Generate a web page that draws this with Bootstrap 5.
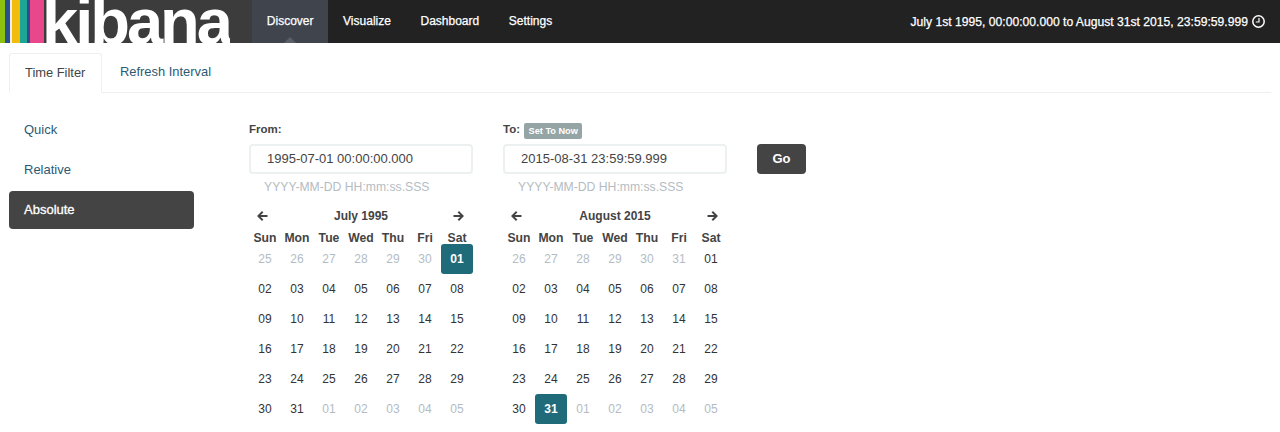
<!DOCTYPE html>
<html lang="en">
<head>
  <meta charset="UTF-8" />
  <title>Kibana</title>
  <link href="https://cdn.jsdelivr.net/npm/bootstrap@5.3.0/dist/css/bootstrap.min.css" rel="stylesheet">
  <style>
    html, body { height: 432px; overflow: hidden; }
    body { background: #fff; color: #444; font: 13px/18px "Liberation Sans", Arial, sans-serif; }
    a { text-decoration: none; }

    .kb-top { height: 43px; background: #222; overflow: hidden; }
    .kb-brand { width: 252px; height: 43px; background: #3c3c3c; overflow: hidden; }
    .kb-stripes { width: 44px; height: 43px; flex: none;
      background-image: linear-gradient(90deg, #8cc20f 0 5px, #2a4e92 5px 10px, #eee 10px 12px, #f1bc0c 12px 20px, #1ea593 20px 27px, #2a4e92 27px 30px, #e8488b 30px 44px); }
    .kb-logotext { color: #fff; font: bold 65px/43px "Liberation Sans", sans-serif; letter-spacing: -3px; margin-left: -2px; height: 43px; overflow: hidden; }
    .kb-mainnav a { display: block; position: relative; height: 43px; line-height: 42px; padding: 0 14.8px; color: #fff; font-size: 12px; -webkit-text-stroke: .25px #fff; }
    .kb-mainnav a.kb-on { background: #3f444d; }
    .kb-mainnav a.kb-on::after { content: ""; position: absolute; left: 50%; bottom: 0; margin-left: -6px; border: 6px solid transparent; border-top: 0; border-bottom-color: #5b6068; }
    .kb-range { height: 43px; color: #fff; font-size: 12.15px; -webkit-text-stroke: .25px #fff; padding-right: 15px; }

    .kb-tabs { margin: 10px 9px 0; height: 40px; border-bottom: 1px solid #ecf0f1; }
    .kb-tabs a { display: block; height: 40px; line-height: 37px; padding: 0 17px 0 18px; color: #2c5a74; font-size: 12.9px; }
    .kb-tabs a.kb-on { color: #444; width: 93px; border: 1px solid #ecf0f1; border-bottom-color: #fff; border-radius: 3px 3px 0 0; padding: 0 0 0 15px; background: #fff; }

    .kb-side { width: 185px; margin: 18px 0 0 9px; flex: none; }
    .kb-side a { display: block; height: 38px; line-height: 38px; padding-left: 15px; margin-bottom: 2px; color: #2c5a74; font-size: 13px; border-radius: 4px; }
    .kb-side a.kb-on { background: #444; color: #fff; -webkit-text-stroke: .3px #fff; }

    .kb-pickers { margin: 30px 0 0 55px; gap: 30px; }
    .kb-pick { width: 224px; }
    .kb-lbl { height: 21px; line-height: 13px; font-size: 11.5px; font-weight: bold; color: #444; display: flex; align-items: flex-start; }
    .kb-setnow { margin-left: 4px; padding: 0 4.5px; height: 16px; line-height: 16px; font-size: 9.2px; font-weight: bold; color: #fff; background: #95a5a6; border-radius: 2px; }
    .kb-in { height: 30px; line-height: 26px; border: 2px solid #ecf0f1; border-radius: 4px; padding-left: 16px; font-size: 13px; color: #444; }
    .kb-help { height: 26px; padding: 4px 0 0 15px; line-height: 18px; color: #b4bcc2; font-size: 12.2px; }
    .kb-monthbar { display: grid; grid-template-columns: repeat(7, 32px); height: 22px; line-height: 22px; margin-top: 5px; text-align: center; font-weight: bold; font-size: 12px; }
    .kb-monthbar b { grid-column: span 5; }
    .kb-days { display: grid; grid-template-columns: repeat(7, 32px); grid-template-rows: 17px; grid-auto-rows: 30px; text-align: center; }
    .kb-days i { font-style: normal; font-weight: bold; font-size: 12.2px; line-height: 23px; height: 17px; }
    .kb-days span { line-height: 30px; font-size: 12px; color: #333; border-radius: 3px; }
    .kb-days span.kb-off { color: #b4bcc2; }
    .kb-days span.kb-pick-day { background: #1f6b7a; color: #fff; font-weight: bold; }
    .kb-go { margin-top: 21px; }
    .kb-go a { display: block; width: 49px; height: 30px; line-height: 30px; background: #444; color: #fff; font-weight: bold; font-size: 13px; text-align: center; border-radius: 4px; }
    .kb-arrow { display: block; margin-top: 5px; }
    .kb-arrow-l { margin-left: 7px; }
    .kb-arrow-r { margin-left: 12px; }
  </style>
</head>
<body>
  <div class="kb-top d-flex align-items-start">
    <a class="kb-brand d-flex" href="#">
      <div class="kb-stripes"></div>
      <div class="kb-logotext">kibana</div>
    </a>
    <div class="kb-mainnav d-flex">
      <a class="kb-on" href="#">Discover</a>
      <a href="#">Visualize</a>
      <a href="#">Dashboard</a>
      <a href="#">Settings</a>
    </div>
    <div class="kb-range ms-auto d-flex align-items-center gap-1">
      <span>July 1st 1995, 00:00:00.000 to August 31st 2015, 23:59:59.999</span>
      <svg width="13" height="13" viewBox="0 0 13 13" fill="none" stroke="#fff"><circle cx="6.5" cy="6.5" r="5.7" stroke-width="1.5"/><path d="M7 3v4H3.8" stroke-width="1.2"/></svg>
    </div>
  </div>

  <div class="kb-tabs d-flex">
    <a class="kb-on" href="#">Time Filter</a>
    <a href="#">Refresh Interval</a>
  </div>

  <div class="d-flex">
    <div class="kb-side">
      <a href="#">Quick</a>
      <a href="#">Relative</a>
      <a class="kb-on" href="#">Absolute</a>
    </div>
    <div class="kb-pickers d-flex" id="pickers"></div>
  </div>

  <script>
    const arrow = (cls, d) => `<svg class="kb-arrow ${cls}" width="12" height="12" viewBox="0 0 12 12" fill="#444"><path d="${d}"/></svg>`;
    const left = arrow("kb-arrow-l", "M6 1 7.4 2.4 4.8 5H11.5V7H4.8L7.4 9.6 6 11 1 6Z");
    const right = arrow("kb-arrow-r", "M6 1 4.6 2.4 7.2 5H.5V7H7.2L4.6 9.6 6 11 11 6Z");
    const names = ["Sun", "Mon", "Tue", "Wed", "Thu", "Fri", "Sat"];
    const pad = n => String(n).padStart(2, "0");

    function calendar(month, lead, total, sel) {
      let cells = names.map(n => `<i>${n}</i>`).join("");
      let all = [];
      for (let i = 0; i < lead.length; i++) all.push([lead[i], true]);
      for (let d = 1; d <= total; d++) all.push([d, false]);
      let next = 1;
      while (all.length < 42) all.push([next++, true]);
      all.forEach(([d, off]) => {
        const on = !off && d === sel;
        cells += `<span class="${on ? "kb-pick-day" : off ? "kb-off" : ""}">${pad(d)}</span>`;
      });
      return `<div class="kb-monthbar"><div>${left}</div><b>${month}</b><div>${right}</div></div><div class="kb-days">${cells}</div>`;
    }

    const from = `<div class="kb-pick">
      <div class="kb-lbl">From:</div>
      <div class="kb-in">1995-07-01 00:00:00.000</div>
      <div class="kb-help">YYYY-MM-DD HH:mm:ss.SSS</div>
      ${calendar("July 1995", [25, 26, 27, 28, 29, 30], 31, 1)}
    </div>`;
    const to = `<div class="kb-pick">
      <div class="kb-lbl">To: <span class="kb-setnow">Set To Now</span></div>
      <div class="kb-in">2015-08-31 23:59:59.999</div>
      <div class="kb-help">YYYY-MM-DD HH:mm:ss.SSS</div>
      ${calendar("August 2015", [26, 27, 28, 29, 30, 31], 31, 31)}
    </div>`;
    document.getElementById("pickers").innerHTML = from + to + `<div class="kb-go"><a href="#">Go</a></div>`;
  </script>
  <script src="https://cdn.jsdelivr.net/npm/bootstrap@5.3.0/dist/js/bootstrap.bundle.min.js"></script>
</body>
</html>
